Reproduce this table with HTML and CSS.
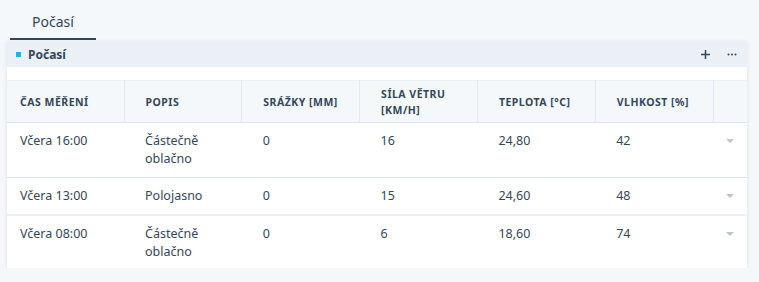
FILE: index.html
```html
<!DOCTYPE html>
<html lang="cs">
<head>
<meta charset="utf-8">
<link rel="stylesheet" href="styles.css">
</head>
<body>
<div class="page">
  <div class="tabs">
    <div class="tab active">Počasí</div>
  </div>
  <div class="card">
    <div class="card-head">
      <span class="sq"></span>
      <span class="title">Počasí</span>
      <span class="actions">
        <svg class="ic" width="11" height="11" viewBox="0 0 11 11"><path d="M5.5 1v9M1 5.5h9" stroke="#33475b" stroke-width="1.5"/></svg>
        <svg class="ic" width="10" height="3" viewBox="0 0 10 3"><circle cx="1.5" cy="1.5" r="1" fill="#33475b"/><circle cx="5" cy="1.5" r="1" fill="#33475b"/><circle cx="8.5" cy="1.5" r="1" fill="#33475b"/></svg>
      </span>
    </div>
    <div class="card-body">
      <table class="grid">
        <thead>
          <tr>
            <th class="c1">Čas měření</th>
            <th>Popis</th>
            <th>Srážky [mm]</th>
            <th>Síla větru<br>[km/h]</th>
            <th>Teplota [°C]</th>
            <th>Vlhkost [%]</th>
            <th class="x"></th>
          </tr>
        </thead>
        <tbody>
          <tr>
            <td class="c1">Včera 16:00</td>
            <td>Částečně<br>oblačno</td>
            <td>0</td>
            <td>16</td>
            <td>24,80</td>
            <td>42</td>
            <td class="x"><svg width="8" height="4" viewBox="0 0 8 4"><path d="M0 0h8L4 4z" fill="#b8c6d6"/></svg></td>
          </tr>
          <tr class="sep">
            <td class="c1">Včera 13:00</td>
            <td>Polojasno</td>
            <td>0</td>
            <td>15</td>
            <td>24,60</td>
            <td>48</td>
            <td class="x"><svg width="8" height="4" viewBox="0 0 8 4"><path d="M0 0h8L4 4z" fill="#b8c6d6"/></svg></td>
          </tr>
          <tr>
            <td class="c1">Včera 08:00</td>
            <td>Částečně<br>oblačno</td>
            <td>0</td>
            <td>6</td>
            <td>18,60</td>
            <td>74</td>
            <td class="x"><svg width="8" height="4" viewBox="0 0 8 4"><path d="M0 0h8L4 4z" fill="#b8c6d6"/></svg></td>
          </tr>
        </tbody>
      </table>
    </div>
  </div>
</div>
</body>
</html>
```
FILE: styles.css
```css
html, body {
  margin: 0;
  padding: 0;
  background: #f5f8fa;
  font-family: "Noto Sans", "Open Sans", sans-serif;
  color: #33475b;
}
.page {
  padding: 0 12px 0 7px;
}
.tabs {
  display: flex;
  height: 41px;
  padding-left: 3px;
}
.tab {
  box-sizing: border-box;
  width: 86px;
  height: 40px;
  text-align: center;
  font-size: 14px;
  line-height: 44px;
  border-bottom: 2px solid #33475b;
}
.card {
  width: 740px;
  background: #fff;
  box-shadow: 0 1px 4px rgba(45, 62, 80, 0.12);
}
.card-head {
  display: flex;
  align-items: center;
  height: 26px;
  background: #eaf0f6;
  padding: 0 10px 0 9px;
}
.sq {
  width: 5px;
  height: 5px;
  background: #21b4dd;
  margin-right: 7px;
}
.title {
  font-weight: 700;
  font-size: 12px;
}
.actions {
  margin-left: auto;
  display: flex;
  align-items: center;
  gap: 16px;
}
.card-body {
  padding-top: 13px;
}
.grid {
  width: 100%;
  border-collapse: collapse;
  table-layout: fixed;
  font-size: 12.5px;
}
.grid th, .grid td {
  box-sizing: border-box;
}
.grid th {
  background: #f5f8fa;
  height: 42px;
  text-align: left;
  font-size: 10.5px;
  font-weight: 700;
  letter-spacing: 0.5px;
  text-transform: uppercase;
  line-height: 16px;
  padding: 0 8px 0 21px;
  border-right: 1px solid #e3e9f0;
  border-bottom: 1px solid #dfe5ec;
  border-top: 1px solid #edf1f5;
}
.grid .c1 {
  padding-left: 13px;
  width: 117px;
}
.grid th:last-child {
  border-right: none;
}
.grid th.x, .grid td.x {
  width: 34px;
  padding: 0;
}
.grid td {
  vertical-align: top;
  line-height: 18px;
  padding: 9px 8px 9px 21px;
  border-bottom: 1px solid #dfe5ec;
}
.grid tr.sep td {
  border-bottom: 2px solid #eaf0f6;
}
.grid tbody tr:last-child td {
  border-bottom: none;
  padding-bottom: 7px;
}
.grid td.x {
  text-align: center;
  padding-top: 16px;
  padding-left: 0;
  line-height: 4px;
}
.grid td.x svg {
  display: inline-block;
  vertical-align: top;
}
```
